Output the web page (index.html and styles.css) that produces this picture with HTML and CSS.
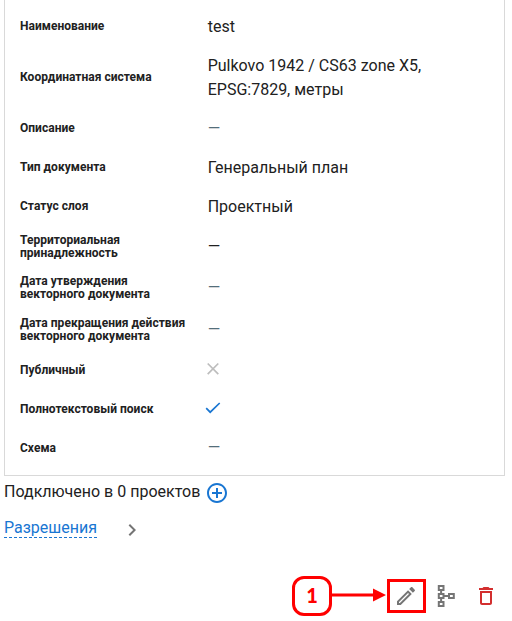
FILE: index.html
```html
<!DOCTYPE html>
<html lang="ru">
<head>
<meta charset="utf-8">
<title>test</title>
<link rel="stylesheet" href="styles.css">
</head>
<body>
<main class="panel">
  <dl class="card">
    <div class="row"><dt>Наименование</dt><dd>test</dd></div>
    <div class="row"><dt>Координатная система</dt><dd>Pulkovo 1942 / CS63 zone X5, EPSG:7829, метры</dd></div>
    <div class="row"><dt>Описание</dt><dd class="muted">—</dd></div>
    <div class="row"><dt>Тип документа</dt><dd>Генеральный план</dd></div>
    <div class="row"><dt>Статус слоя</dt><dd>Проектный</dd></div>
    <div class="row"><dt>Территориальная<br>принадлежность</dt><dd>—</dd></div>
    <div class="row"><dt>Дата утверждения<br>векторного документа</dt><dd class="muted">—</dd></div>
    <div class="row"><dt>Дата прекращения действия<br>векторного документа</dt><dd class="muted">—</dd></div>
    <div class="row"><dt>Публичный</dt><dd class="mark"><svg class="mark-icon no" viewBox="0 0 16 16"><path d="M2.7 2.5l10.6 10.6M13.3 2.5L2.7 13.1"/></svg></dd></div>
    <div class="row"><dt>Полнотекстовый поиск</dt><dd class="mark"><svg class="mark-icon yes" viewBox="0 0 16 16"><path d="M1.2 8.2l4 4L14.700 3"/></svg></dd></div>
    <div class="row"><dt>Схема</dt><dd class="muted">—</dd></div>
  </dl>
  <div class="projects">
    <span>Подключено в 0 проектов</span>
    <svg class="icon blue" viewBox="0 0 24 24"><path d="M13 7h-2v4H7v2h4v4h2v-4h4v-2h-4V7zm-1-5C6.480 2 2 6.480 2 12s4.480 10 10 10 10-4.480 10-10S17.520 2 12 2zm0 18c-4.410 0-8-3.590-8-8s3.590-8 8-8 8 3.590 8 8-3.590 8-8 8z"/></svg>
  </div>
  <div class="permissions">
    <a class="link">Разрешения</a>
    <svg class="icon gray" viewBox="0 0 24 24"><path d="M10 6L8.590 7.410 13.170 12l-4.580 4.590L10 18l6-6z"/></svg>
  </div>
  <div class="actions">
    <span class="step">1</span>
    <svg class="arrow" viewBox="0 0 56 16"><path d="M0 6.500h42v-5L55 8l-13 6.500v-5H0z"/></svg>
    <span class="target"><svg class="icon gray" viewBox="0 0 24 24"><path d="M14.060 9.020l.92.92L5.920 19H5v-.92l9.060-9.060M17.660 3c-.25 0-.51.1-.7.290l-1.830 1.830 3.750 3.750 1.830-1.830c.39-.39.39-1.020 0-1.410l-2.340-2.340c-.2-.2-.45-.29-.71-.29zm-3.600 3.190L3 17.250V21h3.750L17.810 9.940l-3.750-3.750z"/></svg></span>
    <svg class="icon tree" viewBox="0 0 24 24"><path d="M4.800 2h4.700v4H4.800zM4.800 10h4.700v4H4.800zM4.800 18h4.700v4H4.800zM15 10h4.800v4H15zM7.100 6v4M7.100 14v4M9.500 12H15"/></svg>
    <svg class="icon red" viewBox="0 0 24 24"><path d="M6 19c0 1.100.9 2 2 2h8c1.100 0 2-.9 2-2V7H6v12zM8 9h8v10H8V9zm7.500-5l-1-1h-5l-1 1H5v2h14V4h-3.500z"/></svg>
  </div>
</main>
</body>
</html>
```
FILE: styles.css
```css
* {
  box-sizing: border-box;
}

body {
  margin: 0;
  background: #fff;
  color: #212121;
  font: 16px/24px Roboto, sans-serif;
}

.panel {
  padding: 0 7px 0 4px;
}

.card {
  height: 476px;
  margin: 0;
  padding: 7px 15px 0;
  border: 1px solid #d9d9d9;
  border-top: 0;
}

.row {
  display: grid;
  grid-template-columns: 187.700px 225px;
  align-items: center;
  padding: 7.500px 0;
}

dt {
  font-size: 12px;
  font-weight: 700;
  line-height: 13.320px;
  letter-spacing: 0.02px;
  white-space: nowrap;
}

dd {
  margin: 0;
}

.muted {
  color: #546e7a;
}

.mark {
  display: flex;
  align-items: center;
  height: 24px;
}

.mark-icon {
  width: 16px;
  height: 16px;
  margin: -2px 0 0 -2.700px;
  fill: none;
  stroke-width: 1.700;
}

.no {
  stroke: #bdbdbd;
}

.yes {
  stroke: #1976d2;
}

.icon {
  flex: none;
  width: 24px;
  height: 24px;
}

.blue {
  fill: #1976d2;
}

.gray {
  fill: #757575;
}

.red {
  fill: #d32f2f;
}

.tree {
  fill: none;
  stroke: #757575;
  stroke-width: 2;
}

.projects {
  display: flex;
  gap: 5px;
  height: 34px;
  padding-top: 4px;
}

.projects .icon {
  margin-top: 1px;
}

.permissions {
  display: flex;
  align-items: flex-start;
  gap: 23px;
  padding-top: 6px;
}

.permissions .icon {
  margin-top: 2px;
}

.link {
  height: 22px;
  border-bottom: 1px dashed #1976d2;
  color: #1976d2;
}

.actions {
  display: flex;
  align-items: center;
  height: 42px;
  margin-top: 33px;
  padding-left: 288px;
}

.step {
  width: 40px;
  height: 40px;
  border: 3px solid #f00;
  border-radius: 12px;
  color: #f00;
  font: 900 20px/33px Lato, sans-serif;
  text-align: center;
}

.arrow {
  width: 56px;
  height: 16px;
  margin: -3px 0 0 -1px;
  fill: #f00;
}

.target {
  display: grid;
  place-items: center;
  width: 39px;
  height: 34px;
  margin-right: 8px;
  border: 3px solid #f00;
}

.target .icon {
  margin-left: -2px;
}

.red {
  margin-left: 16px;
}
```
